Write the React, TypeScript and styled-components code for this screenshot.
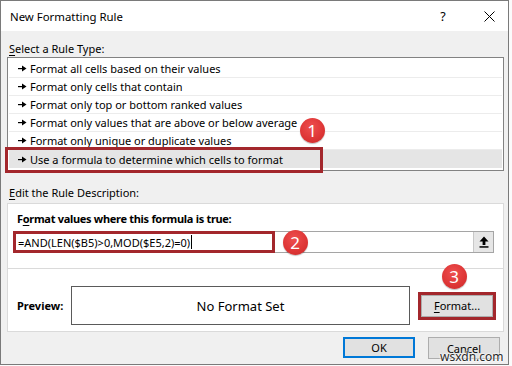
import React from "react";
import styled, { createGlobalStyle } from "styled-components";

const GlobalStyle = createGlobalStyle`
  html, body { margin: 0; padding: 0; background: #ffffff; }
  body { font-family: "Noto Sans", "Open Sans", sans-serif; font-size: 11px; color: #000; }
  * { box-sizing: border-box; }
`;

const Screen = styled.div`
  position: relative;
  width: 512px;
  height: 366px;
  overflow: hidden;
  background: #fbfbfb;
`;

const Dialog = styled.div`
  width: 509px;
  height: 365px;
  border: 1px solid #7a7a7a;
  background: #f0f0f0;
  display: flex;
  flex-direction: column;
`;

const TitleBar = styled.div`
  height: 30px;
  background: #ffffff;
  display: flex;
  align-items: center;
  padding-left: 9px;
`;

const TitleText = styled.div`
  flex: 1;
  font-size: 11.4px;
`;

const TitleButton = styled.div<{ $w: number }>`
  width: ${(p) => p.$w}px;
  height: 30px;
  display: flex;
  align-items: center;
  justify-content: center;
  font-size: 12.5px;
  color: #000;
`;

const Body = styled.div`
  display: flex;
  flex-direction: column;
  padding: 0 4px 0 6px;
`;

const SectionLabel = styled.div<{ $top: number; $bottom: number }>`
  margin-top: ${(p) => p.$top}px;
  margin-bottom: ${(p) => p.$bottom}px;
  line-height: 16px;
  height: 16px;
  padding-left: 2px;
`;

const U = styled.span`
  text-decoration: underline;
  text-underline-offset: 2px;
`;

const RuleList = styled.div`
  border: 1px solid #828282;
  background: #ffffff;
  padding: 2px 1px 2px 1px;
  display: flex;
  flex-direction: column;
`;

const RuleRow = styled.div<{ $selected?: boolean; $last?: boolean }>`
  height: 18px;
  display: flex;
  align-items: center;
  gap: 3px;
  padding-left: 9px;
  background: ${(p) => (p.$selected ? "#e5e5e5" : "transparent")};
  border-bottom: ${(p) => (p.$last ? "none" : "1px solid #ececec")};
`;

const GroupBox = styled.div`
  border: 1px solid #dadada;
  background: #ffffff;
  display: flex;
  flex-direction: column;
  padding: 7px 0 6px 0;
`;

const BoldLabel = styled.div`
  font-weight: 700;
  letter-spacing: -0.3px;
  line-height: 16px;
  height: 16px;
  padding-left: 9px;
`;

const FormulaInput = styled.div`
  margin: 4px 9px 0 5px;
  height: 22px;
  border: 1px solid #a5a5a5;
  display: flex;
  align-items: stretch;
`;

const FormulaText = styled.div`
  flex: 1;
  display: flex;
  align-items: center;
  padding-left: 4px;
`;

const Caret = styled.span`
  display: inline-block;
  width: 1px;
  height: 14px;
  background: #000;
  margin-left: 1px;
`;

const CollapseButton = styled.div`
  width: 20px;
  background: #e6e6e6;
  border-left: 1px solid #c8c8c8;
  display: flex;
  align-items: center;
  justify-content: center;
`;

const Separator = styled.div`
  margin-top: 15px;
  height: 1px;
  background: #dadada;
`;

const PreviewRow = styled.div`
  margin-top: 17px;
  display: flex;
  align-items: center;
  padding-left: 9px;
`;

const PreviewLabel = styled.div`
  width: 54px;
  font-weight: 700;
`;

const PreviewBox = styled.div`
  width: 339px;
  height: 39px;
  border: 1px solid #5a5a5a;
  display: flex;
  align-items: center;
  justify-content: center;
  font-size: 13px;
`;

const Button = styled.div<{ $w: number; $default?: boolean; $ml?: number }>`
  width: ${(p) => p.$w}px;
  height: ${(p) => (p.$default ? 21 : 22)}px;
  margin-left: ${(p) => p.$ml ?? 0}px;
  background: #e1e1e1;
  border: ${(p) => (p.$default ? "2px solid #0078d7" : "1px solid #adadad")};
  display: flex;
  align-items: center;
  justify-content: center;
`;

const ButtonRow = styled.div`
  margin-top: 5px;
  display: flex;
  justify-content: flex-end;
  padding-right: 4px;
`;

const Highlight = styled.div<{ $x: number; $y: number; $w: number; $h: number }>`
  position: absolute;
  left: ${(p) => p.$x}px;
  top: ${(p) => p.$y}px;
  width: ${(p) => p.$w}px;
  height: ${(p) => p.$h}px;
  border: 3px solid #a3272c;
  pointer-events: none;
`;

const Badge = styled.div<{ $x: number; $y: number }>`
  position: absolute;
  left: ${(p) => p.$x - 12.5}px;
  top: ${(p) => p.$y - 12.5}px;
  width: 25px;
  height: 25px;
  border-radius: 50%;
  background: radial-gradient(circle at 45% 35%, #ee4f4f 0%, #dd3535 60%, #c42a2a 100%);
  box-shadow: 0 1px 1px rgba(0, 0, 0, 0.25);
  color: #ffffff;
  font-size: 17px;
  display: flex;
  align-items: center;
  justify-content: center;
  line-height: 1;
`;

const Watermark = styled.div`
  position: absolute;
  left: 440px;
  top: 348px;
  font-size: 12px;
  color: #2a2a2a;
  text-shadow: 0 0 2px #fff, 0 0 2px #fff, 0 0 2px #fff;
`;

const ArrowGlyph = () => (
  <svg width="9" height="7" viewBox="0 0 9 7">
    <rect x="0" y="3" width="5" height="1.2" fill="#000" />
    <path d="M4 0.5 L8.5 3.6 L4 6.5 Z" fill="#000" />
  </svg>
);

const UpArrow = () => (
  <svg width="10" height="12" viewBox="0 0 10 12">
    <path d="M5 0.5 L9.5 5.5 L6.4 5.5 L6.4 9 L3.6 9 L3.6 5.5 L0.5 5.5 Z" fill="#000" />
    <rect x="0.5" y="10.2" width="9" height="1.5" fill="#000" />
  </svg>
);

const rules = [
  "Format all cells based on their values",
  "Format only cells that contain",
  "Format only top or bottom ranked values",
  "Format only values that are above or below average",
  "Format only unique or duplicate values",
  "Use a formula to determine which cells to format",
];

export default function App() {
  return (
    <>
      <GlobalStyle />
      <Screen>
        <Dialog>
          <TitleBar>
            <TitleText>New Formatting Rule</TitleText>
            <TitleButton $w={54}>?</TitleButton>
            <TitleButton $w={38}>
              <svg width="11" height="11" viewBox="0 0 11 11">
                <path d="M0.5 0.5 L10.5 10.5 M10.5 0.5 L0.5 10.5" stroke="#000" strokeWidth="1" />
              </svg>
            </TitleButton>
          </TitleBar>
          <Body>
            <SectionLabel $top={10} $bottom={0}>
              <U>S</U>elect a Rule Type:
            </SectionLabel>
            <RuleList>
              {rules.map((r, i) => (
                <RuleRow key={r} $selected={i === 5} $last={i === 5}>
                  <ArrowGlyph />
                  <span>{r}</span>
                </RuleRow>
              ))}
            </RuleList>
            <SectionLabel $top={14} $bottom={2}>
              <U>E</U>dit the Rule Description:
            </SectionLabel>
            <GroupBox>
              <BoldLabel>
                F<U>o</U>rmat values where this formula is true:
              </BoldLabel>
              <FormulaInput>
                <FormulaText>
                  =AND(LEN($B5)&gt;0,MOD($E5,2)=0)
                  <Caret />
                </FormulaText>
                <CollapseButton>
                  <UpArrow />
                </CollapseButton>
              </FormulaInput>
              <Separator />
              <PreviewRow>
                <PreviewLabel>Preview:</PreviewLabel>
                <PreviewBox>No Format Set</PreviewBox>
                <Button $w={72} $ml={11}>
                  <span>
                    <U>F</U>ormat...
                  </span>
                </Button>
              </PreviewRow>
            </GroupBox>
            <ButtonRow>
              <Button $w={72} $default>
                OK
              </Button>
              <Button $w={72} $ml={13}>
                Cancel
              </Button>
            </ButtonRow>
          </Body>
        </Dialog>
        <Highlight $x={5} $y={147} $w={318} $h={26} />
        <Highlight $x={13} $y={231} $w={262} $h={22} />
        <Highlight $x={418} $y={292} $w={78} $h={28} />
        <Badge $x={312} $y={130}>1</Badge>
        <Badge $x={295} $y={242}>2</Badge>
        <Badge $x={454} $y={276}>3</Badge>
        <Watermark>wsxdn.com</Watermark>
      </Screen>
    </>
  );
}
